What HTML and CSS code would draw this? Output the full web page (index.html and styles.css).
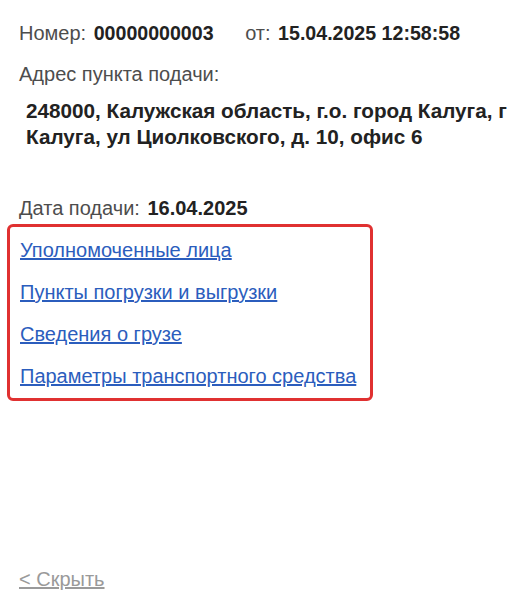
FILE: index.html
```html
<!DOCTYPE html>
<html lang="ru">
<head>
<meta charset="utf-8">
<link rel="stylesheet" href="styles.css">
</head>
<body>
<div class="page">
  <div class="row first">
    <span class="label">Номер:</span>
    <span class="value">00000000003</span>
    <span class="label from">от:</span>
    <span class="value">15.04.2025 12:58:58</span>
  </div>
  <div class="row addr-label"><span class="label">Адрес пункта подачи:</span></div>
  <div class="address">248000, Калужская область, г.о. город Калуга, г Калуга, ул Циолковского, д. 10, офис 6</div>
  <div class="row date"><span class="label">Дата подачи:</span> <span class="value">16.04.2025</span></div>
  <div class="links">
    <a href="#">Уполномоченные лица</a>
    <a href="#">Пункты погрузки и выгрузки</a>
    <a href="#">Сведения о грузе</a>
    <a href="#">Параметры транспортного средства</a>
  </div>
  <div class="spacer"></div>
  <a class="hide" href="#">&lt; Скрыть</a>
</div>
</body>
</html>
```

FILE: styles.css
```css
html, body {
  margin: 0;
  padding: 0;
  background: #fff;
}
body {
  font-family: "Liberation Sans", Arial, sans-serif;
  font-size: 20px;
  color: #333;
}
.page {
  width: 525px;
  height: 611px;
  display: flex;
  flex-direction: column;
  box-sizing: border-box;
  padding: 21px 0 0 19px;
}
.row {
  line-height: 24px;
}
.label {
  color: #4d4d4d;
  margin-right: 2px;
}
.value {
  font-weight: bold;
  color: #222;
}
.first .value {
  font-size: 19.6px;
}
.from {
  margin-left: 26px;
}
.addr-label {
  margin-top: 17px;
}
.address {
  font-weight: bold;
  font-size: 20.7px;
  color: #222;
  line-height: 26px;
  margin: 12px 0 0 7px;
  width: 495px;
}
.date {
  margin-top: 46px;
}
.links {
  margin: 4px 0 0 -12px;
  width: 366px;
  box-sizing: border-box;
  border: 3px solid #e03131;
  border-radius: 6px;
  padding: 11px 0 10px 10px;
  display: flex;
  flex-direction: column;
  gap: 18px;
}
.links a {
  color: #2b5dbd;
  text-decoration: underline;
  line-height: 24px;
  align-self: flex-start;
}
.spacer {
  flex: 1;
}
.hide {
  color: #9a9a9a;
  text-decoration: underline;
  line-height: 24px;
  margin-bottom: 20px;
  align-self: flex-start;
}
```
